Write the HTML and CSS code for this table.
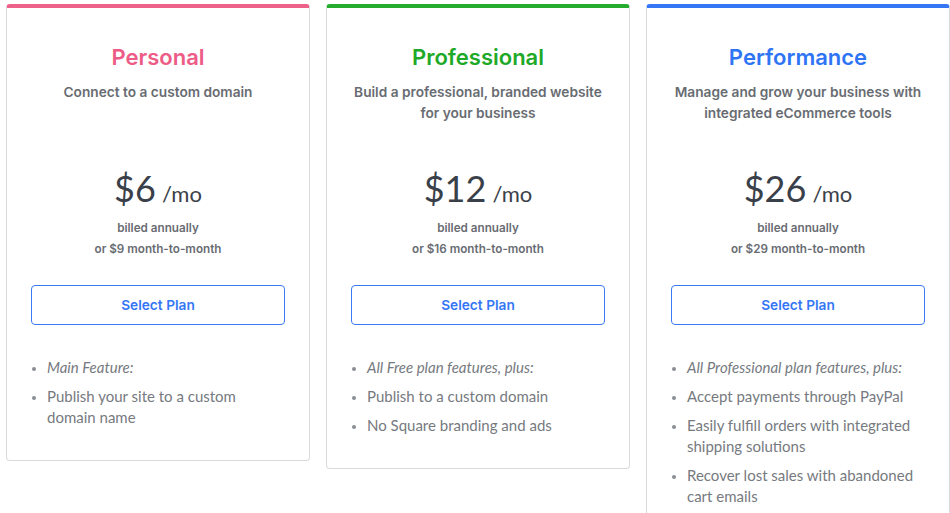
FILE: index.html
```html
<!DOCTYPE html>
<html lang="en">
<head>
<meta charset="utf-8">
<title>Plans</title>
<link rel="stylesheet" href="styles.css">
</head>
<body>
<div class="plans">
  <div class="card card-personal">
    <h2 class="title">Personal</h2>
    <p class="desc">Connect to a custom domain</p>
    <div class="price"><span class="amount">$6</span> <span class="per">/mo</span></div>
    <p class="billing">billed annually<br>or $9 month-to-month</p>
    <button class="select">Select Plan</button>
    <ul class="features">
      <li class="lead">Main Feature:</li>
      <li>Publish your site to a custom domain name</li>
    </ul>
  </div>
  <div class="card card-professional">
    <h2 class="title">Professional</h2>
    <p class="desc">Build a professional, branded website for your business</p>
    <div class="price"><span class="amount">$12</span> <span class="per">/mo</span></div>
    <p class="billing">billed annually<br>or $16 month-to-month</p>
    <button class="select">Select Plan</button>
    <ul class="features">
      <li class="lead">All Free plan features, plus:</li>
      <li>Publish to a custom domain</li>
      <li>No Square branding and ads</li>
    </ul>
  </div>
  <div class="card card-performance">
    <h2 class="title">Performance</h2>
    <p class="desc">Manage and grow your business with integrated eCommerce tools</p>
    <div class="price"><span class="amount">$26</span> <span class="per">/mo</span></div>
    <p class="billing">billed annually<br>or $29 month-to-month</p>
    <button class="select">Select Plan</button>
    <ul class="features">
      <li class="lead">All Professional plan features, plus:</li>
      <li>Accept payments through PayPal</li>
      <li>Easily fulfill orders with integrated shipping solutions</li>
      <li>Recover lost sales with abandoned cart emails</li>
    </ul>
  </div>
</div>
</body>
</html>
```
FILE: styles.css
```css
html, body {
  margin: 0;
  padding: 0;
  background: #ffffff;
}
body {
  font-family: "Inter", "Roboto", sans-serif;
  color: #6b6f75;
}
.plans {
  display: flex;
  align-items: flex-start;
  gap: 16px;
  padding: 4px 0 0 6px;
}
.card {
  box-sizing: border-box;
  width: 304px;
  flex: 0 0 304px;
  border: 1px solid #d8dadd;
  border-top: 4px solid;
  border-radius: 4px;
  padding: 34px 24px 32px;
  text-align: center;
}
.card-personal { border-top-color: #ee6189; }
.card-professional { border-top-color: #25ac2e; }
.card-performance { border-top-color: #3576f5; }
.title {
  margin: 0;
  font-size: 22px;
  line-height: 30px;
  font-weight: 600;
}
.card-personal .title { color: #ec5c86; }
.card-professional .title { color: #1fa928; }
.card-performance .title { color: #2f74f4; }
.desc {
  margin: 10px 0 0;
  min-height: 42px;
  font-size: 13.7px;
  line-height: 21px;
  font-weight: 600;
  color: #686c72;
}
.price {
  margin-top: 42px;
  font-family: "Lato", sans-serif;
  font-weight: 400;
  line-height: 44px;
  color: #3a4049;
}
.amount {
  font-size: 36px;
}
.per {
  font-size: 22px;
  margin-left: 2px;
}
.billing {
  margin: 0;
  font-size: 11.7px;
  line-height: 21px;
  font-weight: 600;
  color: #686c72;
}
.select {
  display: block;
  box-sizing: border-box;
  width: 100%;
  height: 40px;
  margin-top: 25px;
  background: #fff;
  border: 1px solid #3a7af5;
  border-radius: 4px;
  color: #3576f5;
  font-family: "Inter", "Roboto", sans-serif;
  font-size: 13.7px;
  font-weight: 600;
}
.features {
  margin: 32px 0 0;
  padding: 0 0 0 16px;
  text-align: left;
  font-family: "Lato", sans-serif;
  font-size: 15px;
  line-height: 21px;
  color: #767a80;
}
.features li {
  margin-bottom: 8px;
}
.features li:last-child {
  margin-bottom: 0;
}
.features li::marker {
  color: #8a8e94;
  font-size: 12px;
}
.features .lead {
  font-style: italic;
}
```
